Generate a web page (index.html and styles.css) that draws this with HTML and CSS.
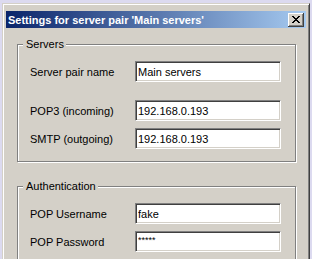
FILE: index.html
```html
<!DOCTYPE html>
<html lang="en">
<head>
    <meta charset="UTF-8" />
    <title>Settings for server pair</title>
    <link rel="stylesheet" href="styles.css">
</head>
<body>
    <div class="window">
      <div class="titlebar">
        <span class="title">Settings for server pair 'Main servers'</span>
        <span class="close-btn">
          <svg width="8" height="7" viewBox="0 0 8 7" shape-rendering="crispEdges">
            <path d="M0 0h2v1h-2z M6 0h2v1h-2z M1 1h2v1h-2z M5 1h2v1h-2z M2 2h4v1h-4z M3 3h2v1h-2z M2 4h4v1h-4z M1 5h2v1h-2z M5 5h2v1h-2z M0 6h2v1h-2z M6 6h2v1h-2z" fill="#000"/>
          </svg>
        </span>
      </div>

      <div class="client">
        <fieldset class="group">
          <legend>Servers</legend>
          <div class="row">
            <label for="pairName">Server pair name</label>
            <input type="text" id="pairName" value="Main servers" />
          </div>
          <div class="row first-server">
            <label for="pop3">POP3 (incoming)</label>
            <input type="text" id="pop3" value="192.168.0.193" />
          </div>
          <div class="row">
            <label for="smtp">SMTP (outgoing)</label>
            <input type="text" id="smtp" value="192.168.0.193" />
          </div>
        </fieldset>

        <fieldset class="group">
          <legend>Authentication</legend>
          <div class="row">
            <label for="popUser">POP Username</label>
            <input type="text" id="popUser" value="fake" />
          </div>
          <div class="row">
            <label for="popPass">POP Password</label>
            <input type="text" id="popPass" class="password" value="*****" />
          </div>
          <div class="row">
            <label for="smtpUser"></label>
            <input type="text" id="smtpUser" value="" />
          </div>
        </fieldset>
      </div>
    </div>
</body>
</html>
```

FILE: styles.css
```css
html,
body {
  margin: 0;
  height: 259px;
  overflow: hidden;
}
body {
  background-color: #dcdaf0;
  font-family: "Liberation Sans", Arial, sans-serif;
  font-size: 11px;
  color: #000;
}
.window {
  margin: 3px 2px 0 2px;
  height: 300px;
  padding: 7px 3px 0 3px;
  background-color: #d4d0c8;
  border-top: 1px solid #d4d0c8;
  border-left: 1px solid #d4d0c8;
  border-right: 1px solid #404040;
  box-shadow: inset 1px 1px 0 #fff, inset -1px 0 0 #808080;
}
.titlebar {
  height: 17px;
  display: flex;
  align-items: center;
  justify-content: space-between;
  padding: 0 2px 0 2px;
  background: linear-gradient(to right, #0a246a, #a6caf0);
}
.title {
  color: #fff;
  font-weight: bold;
  white-space: nowrap;
}
.close-btn {
  width: 16px;
  height: 14px;
  box-sizing: border-box;
  display: flex;
  align-items: center;
  justify-content: center;
  background-color: #d4d0c8;
  border-right: 1px solid #404040;
  border-bottom: 1px solid #404040;
  box-shadow: inset 1px 1px 0 #fff, inset -1px -1px 0 #808080;
}
.client {
  padding: 10px 10px 0 11px;
}
.group {
  margin: 0 0 18px 0;
  padding: 0 0 12px 12px;
  border: 1px solid #808080;
  box-shadow: inset 1px 1px 0 #fff, 1px 1px 0 #fff;
  min-width: 0;
}
.group legend {
  margin-left: -7px;
  padding: 0 2px 0 3px;
  line-height: 13px;
  background-color: #d4d0c8;
}
.row {
  display: flex;
  align-items: center;
  margin-top: 7px;
}
.row:first-of-type {
  margin-top: 10px;
}
.row.first-server {
  margin-top: 18px;
}
.row label {
  width: 105px;
  flex: none;
}
.row input {
  width: 146px;
  height: 21px;
  box-sizing: border-box;
  margin: 0;
  padding: 0 2px;
  font-family: "Liberation Sans", Arial, sans-serif;
  font-size: 11px;
  color: #000;
  background-color: #fff;
  border: 1px solid;
  border-color: #808080 #fff #fff #808080;
  box-shadow: inset 1px 1px 0 #404040, inset -1px -1px 0 #d4d0c8;
  outline: none;
}
.row input.password {
  font-size: 9px;
  padding-bottom: 4px;
}
```
